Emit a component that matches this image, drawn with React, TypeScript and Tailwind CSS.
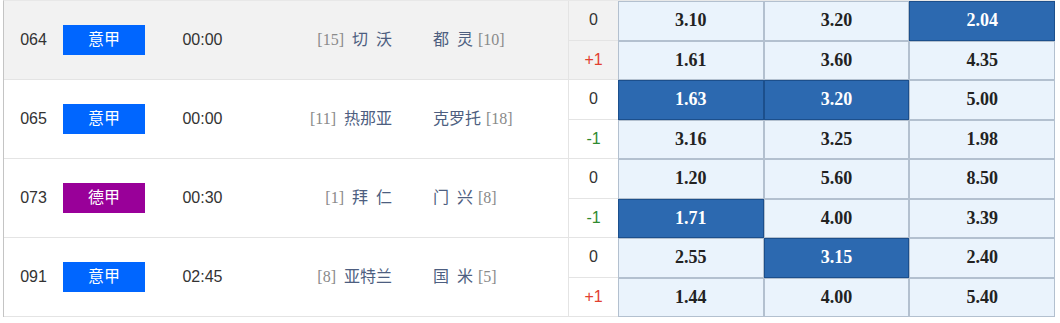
type Line = { hcap: string; odds: [string, string, string]; hi: number[] };

type Match = {
  no: string;
  league: string;
  leagueColor: string;
  time: string;
  homeRank: string;
  home: string;
  away: string;
  awayRank: string;
  lines: [Line, Line];
};

// \u2002 = the wide gap the site puts inside two-character team names
const MATCHES: Match[] = [
  {
    no: "064",
    league: "意甲",
    leagueColor: "bg-[#0066ff]",
    time: "00:00",
    homeRank: "[15]",
    home: "切\u2002沃",
    away: "都\u2002灵",
    awayRank: "[10]",
    lines: [
      { hcap: "0", odds: ["3.10", "3.20", "2.04"], hi: [2] },
      { hcap: "+1", odds: ["1.61", "3.60", "4.35"], hi: [] },
    ],
  },
  {
    no: "065",
    league: "意甲",
    leagueColor: "bg-[#0066ff]",
    time: "00:00",
    homeRank: "[11]",
    home: "热那亚",
    away: "克罗托",
    awayRank: "[18]",
    lines: [
      { hcap: "0", odds: ["1.63", "3.20", "5.00"], hi: [0, 1] },
      { hcap: "-1", odds: ["3.16", "3.25", "1.98"], hi: [] },
    ],
  },
  {
    no: "073",
    league: "德甲",
    leagueColor: "bg-[#990099]",
    time: "00:30",
    homeRank: "[1]",
    home: "拜\u2002仁",
    away: "门\u2002兴",
    awayRank: "[8]",
    lines: [
      { hcap: "0", odds: ["1.20", "5.60", "8.50"], hi: [] },
      { hcap: "-1", odds: ["1.71", "4.00", "3.39"], hi: [0] },
    ],
  },
  {
    no: "091",
    league: "意甲",
    leagueColor: "bg-[#0066ff]",
    time: "02:45",
    homeRank: "[8]",
    home: "亚特兰",
    away: "国\u2002米",
    awayRank: "[5]",
    lines: [
      { hcap: "0", odds: ["2.55", "3.15", "2.40"], hi: [1] },
      { hcap: "+1", odds: ["1.44", "4.00", "5.40"], hi: [] },
    ],
  },
];

const sans = "font-['Liberation_Sans','Noto_Sans_CJK_SC',sans-serif]";
const serif = "font-['Liberation_Serif','Noto_Sans_CJK_SC',serif]";

function hcapColor(h: string) {
  if (h.startsWith("+")) return "text-[#e2402f]";
  if (h.startsWith("-")) return "text-[#2f8a2f]";
  return "text-[#333]";
}

export default function App() {
  return (
    <div className={`w-[1060px] h-[323px] bg-white ${sans}`}>
      <div className="ml-[3px] w-[1052px] border-l border-[#c4c4c4] border-t border-t-[#e8e8e8]">
        {MATCHES.map((m, i) => (
          <MatchRow key={m.no} m={m} shaded={i === 0} />
        ))}
      </div>
    </div>
  );
}

function MatchRow({ m, shaded }: { m: Match; shaded: boolean }) {
  return (
    <div className="flex h-[79px]">
      <div className={`flex w-[614px] shrink-0 border-b border-[#e4e4e4] ${shaded ? "bg-[#f2f2f2]" : "bg-white"}`}>
        <div className="w-[59px] flex items-center justify-center text-[16px] text-[#333]">{m.no}</div>
        <div className="w-[82px] flex items-center">
          <div className={`w-[82px] h-[30px] flex items-center justify-center text-white text-[16px] ${m.leagueColor}`}>
            {m.league}
          </div>
        </div>
        <div className="w-[115px] flex items-center justify-center text-[16px] text-[#333]">{m.time}</div>
        <div className={`w-[152px] flex items-center justify-end pr-[20px] text-[16px] ${serif}`}>
          <span className="text-[#8a8a8a]">{m.homeRank}</span>
          <span className="ml-[8px] text-[#4d5e80]">{m.home}</span>
        </div>
        <div className={`w-[156px] flex items-center pl-[21px] text-[16px] ${serif}`}>
          <span className="text-[#4d5e80]">{m.away}</span>
          <span className="ml-[5px] text-[#8a8a8a]">{m.awayRank}</span>
        </div>
        <div className="w-[50px] flex flex-col border-l border-[#e4e4e4] text-[16px]">
          {m.lines.map((l, j) => (
            <div
              key={j}
              className={`flex-1 flex items-center justify-center ${hcapColor(l.hcap)} ${j === 0 ? "border-b border-[#e4e4e4]" : ""}`}
            >
              {l.hcap}
            </div>
          ))}
        </div>
      </div>
      <div className="w-[437px] shrink-0 grid grid-cols-3 grid-rows-2">
        {m.lines.map((l, j) =>
          l.odds.map((o, k) => {
            const on = l.hi.includes(k);
            return (
              <div
                key={`${j}-${k}`}
                className={`flex items-center justify-center border text-[18px] font-bold ${serif} ${
                  on
                    ? "bg-[#2c69b0] border-[#1c4f8c] text-white"
                    : "bg-[#eaf3fc] border-[#b3c0cf] text-[#222]"
                }`}
              >
                {o}
              </div>
            );
          })
        )}
      </div>
    </div>
  );
}
